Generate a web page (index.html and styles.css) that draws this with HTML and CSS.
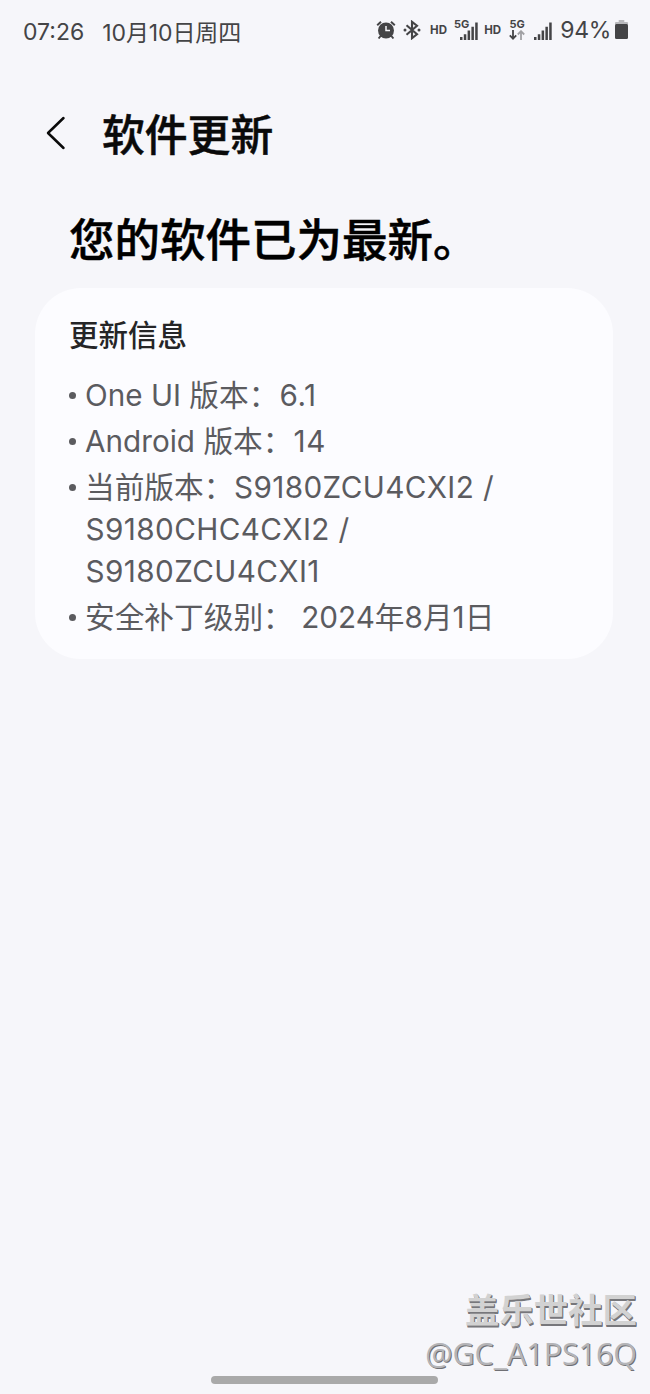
FILE: index.html
```html
<!DOCTYPE html>
<html lang="zh-CN">
<head>
<meta charset="UTF-8">
<meta name="viewport" content="width=device-width, initial-scale=1.0">
<title>软件更新</title>
<link rel="stylesheet" href="styles.css">
</head>
<body>
  <div class="status_bar">
    <span class="time">07:26</span>
    <span class="date">10月10日周四</span>
    <div class="status_icons">
      <svg class="alarm" width="20" height="20" viewBox="0 0 20 20">
        <circle cx="10" cy="10.5" r="8" fill="#444446"/>
        <path d="M1.2 5.2 5 1.8M18.8 5.2 15 1.8M4.6 16l-2 2.5M15.4 16l2 2.5" stroke="#444446" stroke-width="2"/>
        <path d="M10 6v4.6h4" fill="none" stroke="#f6f6fa" stroke-width="1.5"/>
      </svg>
      <svg class="bluetooth" width="18" height="20" viewBox="0 0 18 20">
        <path d="M3.5 5.3 14 14.3 9 18.2V1.8L14 5.7 3.5 14.7" fill="none" stroke="#444446" stroke-width="2.1"/>
        <circle cx="2" cy="10" r="1.5" fill="#444446"/>
        <circle cx="16" cy="10" r="1.5" fill="#444446"/>
      </svg>
      <span class="hd">HD</span>
      <div class="signal_5g">
        <span class="net">5G</span>
        <svg width="18" height="18" viewBox="0 0 18 18" fill="#444446">
          <path d="M0 15h2.5v3H0zM3.8 12.2h2.5V18H3.8zM7.6 8.600h2.500V18H7.600zM11.400 4.800h2.500V18h-2.500zM15.200.5h2.500V18h-2.500z"/>
        </svg>
      </div>
      <span class="hd">HD</span>
      <div class="data_5g">
        <span class="net">5G</span>
        <svg width="16" height="10" viewBox="0 0 16 10" fill="none" stroke-width="1.8">
          <path d="M4 0v8.5M.8 5.3 4 8.6l3.2-3.3" stroke="#444446"/>
          <path d="M12 10V1.2M8.8 4.5 12 1.2l3.2 3.3" stroke="#a0a0a3"/>
        </svg>
      </div>
      <svg class="signal" width="18" height="18" viewBox="0 0 18 18" fill="#444446">
        <path d="M0 15h2.5v3H0zM3.8 12.2h2.5V18H3.8zM7.6 8.600h2.500V18H7.600zM11.400 4.800h2.500V18h-2.500zM15.200.5h2.500V18h-2.500z"/>
      </svg>
      <span class="percent">94%</span>
      <svg class="battery" width="13" height="19" viewBox="0 0 14 19" preserveAspectRatio="none">
        <path d="M4 0h6v2h3q1 0 1 1v3H0V3q0-1 1-1h3z" fill="#b9b9bc"/>
        <rect y="4" width="14" height="15" rx="1.5" fill="#444446"/>
      </svg>
    </div>
  </div>

  <div class="header">
    <svg width="20" height="34" viewBox="0 0 20 34">
      <path d="M17.5 2 2 17l15.5 15" fill="none" stroke="#0a0a0a" stroke-width="2.5" stroke-linecap="round" stroke-linejoin="round"/>
    </svg>
    <h1>软件更新</h1>
  </div>

  <h2>您的软件已为最新。</h2>

  <div class="card">
    <h3>更新信息</h3>
    <ul>
      <li><span class="name">One UI</span> 版本：<span class="value">6.1</span></li>
      <li><span class="name">Android</span> 版本：<span class="value">14</span></li>
      <li>当前版本：<span class="build">S9180ZCU4CXI2 /</span><br><span class="build">S9180CHC4CXI2 /</span><br><span class="build">S9180ZCU4CXI1</span></li>
      <li>安全补丁级别： <span class="patch">2024年8月1日</span></li>
    </ul>
  </div>

  <div class="watermark">
    <div class="community">盖乐世社区</div>
    <div class="user">@GC_A1PS16Q</div>
  </div>
  <div class="nav_handle"></div>
</body>
</html>
```
FILE: styles.css
```css
body {
  margin: 0;
  height: 1394px;
  display: flex;
  flex-direction: column;
  background: #f6f6fa;
  font-family: Inter, "Noto Sans CJK SC", sans-serif;
  overflow: hidden;
}

h1, h2, h3, ul {
  margin: 0;
  padding: 0;
}

.status_bar {
  height: 62px;
  padding: 0 22px 0 23px;
  display: flex;
  align-items: center;
  color: #444446;
  font-size: 23px;
  white-space: nowrap;
}

.time {
  margin-top: 2px;
}

.date {
  margin-left: 18px;
  letter-spacing: -0.1px;
}

.status_icons {
  margin-left: auto;
  display: flex;
  align-items: center;
  height: 58px;
  padding-bottom: 3px;
}

.bluetooth {
  margin-left: 7px;
}

.hd {
  margin-left: 9px;
  font-size: 11.5px;
  font-weight: 700;
}

.net {
  font-size: 11px;
  font-weight: 700;
  line-height: 11px;
}

.signal_5g {
  display: flex;
  margin-left: 7px;
}

.signal_5g svg {
  margin: 3px 0 0 -9px;
}

.signal_5g + .hd {
  margin-left: 6px;
}

.data_5g {
  display: flex;
  flex-direction: column;
  align-items: center;
  margin-left: 8px;
}

.signal {
  margin: 3px 0 0 9px;
}

.percent {
  margin-left: 8px;
  letter-spacing: -0.3px;
}

.battery {
  margin-left: 4px;
}

.header {
  display: flex;
  align-items: center;
  height: 64px;
  margin-top: 39px;
  padding-left: 46px;
}

.header h1 {
  margin-left: 36px;
  padding-top: 5px;
  font-size: 42.8px;
  font-weight: 500;
  line-height: 64px;
  color: #0a0a0a;
  -webkit-text-stroke: 0.5px #0a0a0a;
}

h2 {
  margin: 43px 0 0 69px;
  font-size: 45.5px;
  font-weight: 500;
  line-height: 66px;
  color: #000;
  -webkit-text-stroke: 0.5px #000;
}

.card {
  box-sizing: border-box;
  width: 578px;
  height: 371px;
  margin: 14px 0 0 35px;
  padding: 26px 34px;
  border-radius: 46px;
  background: #fcfcff;
}

.card h3 {
  font-size: 29.5px;
  font-weight: 500;
  line-height: 42px;
  color: #252527;
}

.card ul {
  margin-top: 18px;
  list-style: none;
  color: #5b5b5f;
  font-size: 29.7px;
}

.card li {
  position: relative;
  padding-left: 16px;
  margin-bottom: 4px;
  line-height: 42px;
  white-space: nowrap;
}

.card li::before {
  content: "";
  position: absolute;
  left: 0;
  top: 18px;
  width: 7px;
  height: 7px;
  border-radius: 50%;
  background: #5b5b5f;
}

.build {
  margin-left: 0.5px;
  letter-spacing: 0.4px;
}

.value {
  margin-left: 1px;
  letter-spacing: 0.6px;
}

.watermark {
  margin-top: auto;
  padding-right: 13px;
  text-align: right;
}

.community {
  font-family: "Noto Sans CJK SC", sans-serif;
  font-size: 34.4px;
  font-weight: 700;
  line-height: 46px;
  color: #d2d2d2;
  text-shadow: 1px 1px 0 #77777b, 1px 2px 0 #77777b;
}

.user {
  font-family: "Open Sans", sans-serif;
  font-size: 30.4px;
  line-height: 45px;
  color: #b4b4b7;
  text-shadow: 1px 1px 0 #707074;
}

.nav_handle {
  width: 227px;
  height: 8px;
  margin: 0 0 10px 211px;
  border-radius: 4px;
  background: #a9a9a9;
}
```
